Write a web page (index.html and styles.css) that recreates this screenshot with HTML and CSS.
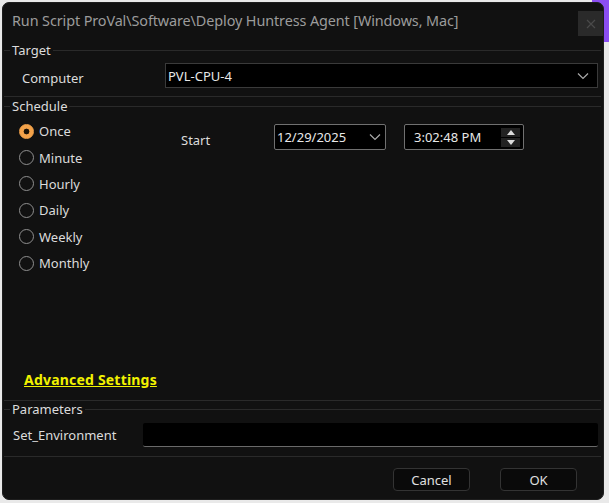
FILE: index.html
```html
<!DOCTYPE html>
<html>
<head>
<meta charset="utf-8">
<link rel="stylesheet" href="styles.css">
</head>
<body>
<div class="window">
  <div class="titlebar">
    <span class="title">Run Script ProVal\Software\Deploy Huntress Agent [Windows, Mac]</span>
    <span class="close"><svg width="12" height="12" viewBox="0 0 12 12"><path d="M2 2L10 10M10 2L2 10" stroke="#4a4a4a" stroke-width="1.2"/></svg></span>
  </div>

  <div class="group target">
    <div class="group-head"><span>Target</span></div>
    <div class="row computer-row">
      <span class="label computer-label">Computer</span>
      <div class="select computer-select">
        <span>PVL-CPU-4</span>
        <svg width="12" height="8" viewBox="0 0 12 8"><path d="M1 1.5L6 6.5L11 1.5" fill="none" stroke="#aaa" stroke-width="1.2"/></svg>
      </div>
    </div>
  </div>

  <div class="group schedule">
    <div class="group-head"><span>Schedule</span></div>
    <div class="schedule-body">
      <div class="schedule-top">
        <div class="radios">
          <label class="radio checked"><span class="dot"></span>Once</label>
          <label class="radio"><span class="dot"></span>Minute</label>
          <label class="radio"><span class="dot"></span>Hourly</label>
          <label class="radio"><span class="dot"></span>Daily</label>
          <label class="radio"><span class="dot"></span>Weekly</label>
          <label class="radio"><span class="dot"></span>Monthly</label>
        </div>
        <div class="start">
          <span class="label start-label">Start</span>
          <div class="picker date">
            <span>12/29/2025</span>
            <svg width="12" height="8" viewBox="0 0 12 8"><path d="M1 1.5L6 6.5L11 1.5" fill="none" stroke="#aaa" stroke-width="1.2"/></svg>
          </div>
          <div class="picker time">
            <span>3:02:48 PM</span>
            <span class="spin">
              <span class="spin-btn"><svg width="8" height="5" viewBox="0 0 8 5"><path d="M0 5L4 0L8 5Z" fill="#ddd"/></svg></span>
              <span class="spin-btn"><svg width="8" height="5" viewBox="0 0 8 5"><path d="M0 0L4 5L8 0Z" fill="#ddd"/></svg></span>
            </span>
          </div>
        </div>
      </div>
      <a class="advanced">Advanced Settings</a>
    </div>
  </div>

  <div class="group params">
    <div class="group-head"><span>Parameters</span></div>
    <div class="row param-row">
      <span class="label param-label">Set_Environment</span>
      <div class="textbox"></div>
    </div>
  </div>

  <div class="footer">
    <button class="btn">Cancel</button>
    <button class="btn">OK</button>
  </div>
</div>
</body>
</html>
```

FILE: styles.css
```css
* { box-sizing: border-box; }
html, body { margin: 0; height: 100%; }
body {
  padding: 2px 0 0 2px;
  background:
    linear-gradient(#8b4ef2, #8b4ef2) no-repeat right 0 top 0 / 17px 42px,
    #e9e9e9;
  font-family: "Noto Sans", "Open Sans", sans-serif;
  font-size: 13px;
  color: #dcdcdc;
}
.window {
  width: 602px;
  height: 498px;
  background: #111111;
  border-radius: 7px;
  border: 1px solid #1e1e1e;
  display: flex;
  flex-direction: column;
  overflow: hidden;
}
.titlebar {
  height: 36px;
  display: flex;
  align-items: center;
  justify-content: space-between;
  padding: 0 0 0 9px;
}
.title {
  font-size: 14.4px;
  color: #9c9c9c;
  letter-spacing: -0.1px;
  padding-bottom: 2px;
}
.close {
  width: 26px;
  height: 25px;
  margin: 8px -1px 0 0;
  background: #2a2a2a;
  display: flex;
  align-items: center;
  justify-content: center;
  align-self: flex-start;
}
.group {
  border-bottom: 1px solid #2a2a2a;
  margin: 0 2px 0 1px;
}
.group-head {
  display: flex;
  align-items: center;
  height: 14px;
  gap: 2px;
  line-height: 14px;
}
.group-head::before {
  content: "";
  width: 6px;
  height: 1px;
  background: #2a2a2a;
}
.group-head::after {
  content: "";
  flex: 1;
  height: 1px;
  background: #2a2a2a;
}
.target { padding: 4px 0 8px; }
.row { display: flex; align-items: center; }
.computer-row { margin-top: 6px; height: 25px; }
.computer-label { width: 161px; padding-left: 18px; padding-top: 4px; }
.select {
  flex: 1;
  height: 25px;
  margin-right: 3px;
  background: #000;
  border: 1px solid #3a3a3a;
  display: flex;
  align-items: center;
  justify-content: space-between;
  padding: 0 8px 0 2px;
  color: #e8e8e8;
}
.schedule { padding: 2px 0 0; }
.schedule-body {
  height: 287px;
  display: flex;
  flex-direction: column;
}
.schedule-top { display: flex; }
.radios {
  display: flex;
  flex-direction: column;
  padding: 5px 0 0 15px;
  width: 177px;
}
.radio {
  height: 26.4px;
  display: flex;
  align-items: center;
  gap: 5px;
  color: #dcdcdc;
}
.dot {
  width: 15px;
  height: 15px;
  border-radius: 50%;
  border: 1.5px solid #8f8f8f;
  display: inline-block;
}
.radio.checked .dot {
  background: radial-gradient(circle, #1a1208 0 2.6px, #f3a24a 3.2px);
  border-color: #f3a24a;
}
.start {
  display: flex;
  align-items: flex-start;
  padding-top: 11px;
}
.start-label { width: 93px; padding-top: 7px; }
.picker {
  height: 26px;
  background: #000;
  border: 1px solid #707070;
  border-radius: 2px;
  display: flex;
  align-items: center;
  justify-content: space-between;
  color: #e8e8e8;
}
.date { width: 112px; padding: 0 4px 0 2px; margin-right: 18px; }
.time { width: 120px; padding: 0 3px 0 9px; }
.spin {
  display: flex;
  flex-direction: column;
  gap: 1px;
}
.spin-btn {
  width: 19px;
  height: 9px;
  background: #222;
  display: flex;
  align-items: center;
  justify-content: center;
}
.advanced {
  margin-top: auto;
  margin-bottom: 11px;
  margin-left: 20px;
  color: #f2f200;
  font-weight: bold;
  text-decoration: underline;
  font-size: 14px;
  letter-spacing: 0.2px;
  align-self: flex-start;
}
.params { padding: 1px 0 9px; }
.param-row { margin-top: 7px; height: 24px; }
.param-label { width: 139px; padding-left: 9px; }
.textbox {
  flex: 1;
  height: 24px;
  margin-right: 3px;
  background: #000;
  border-bottom: 1px solid #6a6a6a;
  border-radius: 2px;
}
.footer {
  display: flex;
  justify-content: flex-end;
  gap: 30px;
  padding: 11px 26px 0 0;
}
.btn {
  width: 77px;
  height: 23px;
  background: #0a0a0a;
  border: 1px solid #333;
  border-radius: 4px;
  color: #e0e0e0;
  font-family: "Noto Sans", "Open Sans", sans-serif;
  font-size: 13px;
  padding: 0;
}
```
